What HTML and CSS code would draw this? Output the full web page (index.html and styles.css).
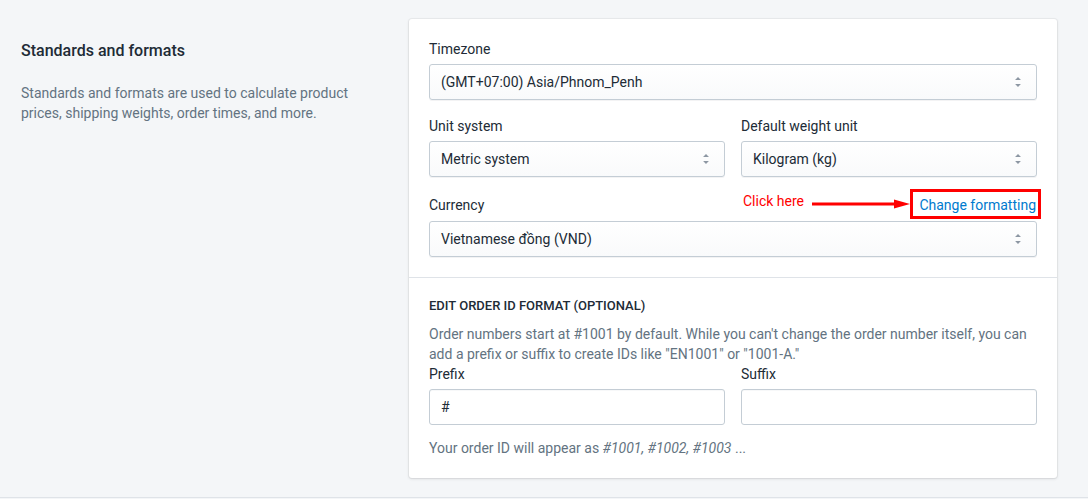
FILE: index.html
```html
<!DOCTYPE html>
<html lang="en">
<head>
<meta charset="utf-8">
<title>Standards and formats</title>
<link rel="stylesheet" href="styles.css">
</head>
<body>
<div class="page">
  <div class="layout">
    <div class="annotation">
      <h2 class="section-title">Standards and formats</h2>
      <p class="section-desc">Standards and formats are used to calculate product prices, shipping weights, order times, and more.</p>
    </div>
    <div class="card">
      <div class="card-section">
        <div class="field">
          <label class="label">Timezone</label>
          <div class="select">
            <span class="select-value">(GMT+07:00) Asia/Phnom_Penh</span>
            <svg class="select-arrows" viewBox="0 0 20 20" width="20" height="20"><path d="M13 8l-3-3-3 3h6zm-.1 4L10 15l-2.9-3h5.8z"/></svg>
          </div>
        </div>
        <div class="field-row">
          <div class="field">
            <label class="label">Unit system</label>
            <div class="select">
              <span class="select-value">Metric system</span>
              <svg class="select-arrows" viewBox="0 0 20 20" width="20" height="20"><path d="M13 8l-3-3-3 3h6zm-.1 4L10 15l-2.9-3h5.8z"/></svg>
            </div>
          </div>
          <div class="field">
            <label class="label">Default weight unit</label>
            <div class="select">
              <span class="select-value">Kilogram (kg)</span>
              <svg class="select-arrows" viewBox="0 0 20 20" width="20" height="20"><path d="M13 8l-3-3-3 3h6zm-.1 4L10 15l-2.9-3h5.8z"/></svg>
            </div>
          </div>
        </div>
        <div class="field field-currency">
          <div class="label-row">
            <label class="label">Currency</label>
            <a class="link" href="#">Change formatting</a>
            <div class="callout">
              <span class="callout-text">Click here</span>
              <svg class="callout-arrow" viewBox="0 0 98 10" width="98" height="10"><path d="M0 5h84" stroke="#f00" stroke-width="3"/><path d="M82 0.5L98 5L82 9.5z" fill="#f00"/></svg>
            </div>
            <div class="callout-box"></div>
          </div>
          <div class="select">
            <span class="select-value">Vietnamese đồng (VND)</span>
            <svg class="select-arrows" viewBox="0 0 20 20" width="20" height="20"><path d="M13 8l-3-3-3 3h6zm-.1 4L10 15l-2.9-3h5.8z"/></svg>
          </div>
        </div>
      </div>
      <div class="card-section section-order">
        <h3 class="subheading">Edit order ID format (optional)</h3>
        <p class="help">Order numbers start at #1001 by default. While you can't change the order number itself, you can add a prefix or suffix to create IDs like "EN1001" or "1001-A."</p>
        <div class="field-row tight">
          <div class="field">
            <label class="label">Prefix</label>
            <div class="input">#</div>
          </div>
          <div class="field">
            <label class="label">Suffix</label>
            <div class="input"></div>
          </div>
        </div>
        <p class="help footer-note">Your order ID will appear as <em>#1001, #1002, #1003</em> ...</p>
      </div>
    </div>
  </div>
</div>
</body>
</html>
```

FILE: styles.css
```css
* { box-sizing: border-box; }
html, body { margin: 0; padding: 0; background: #f4f6f8; }
body {
  font-family: Roboto, "Open Sans", Arial, sans-serif;
  font-size: 14px;
  line-height: 20px;
  color: #212b36;
}
.page {
  padding: 19px 31px 19px 21px;
  border-bottom: 1px solid #dfe3e8;
}
.layout {
  display: flex;
  align-items: flex-start;
}
.annotation {
  width: 388px;
  padding-top: 20px;
  padding-right: 40px;
}
.section-title {
  margin: 0;
  font-size: 16px;
  line-height: 24px;
  font-weight: 500;
  color: #212b36;
}
.section-desc {
  margin: 20px 0 0;
  color: #637381;
}
.card {
  flex: 1;
  background: #fff;
  border-radius: 3px;
  box-shadow: 0 0 0 1px rgba(63,63,68,.05), 0 1px 3px 0 rgba(63,63,68,.15);
}
.card-section {
  padding: 20px;
}
.card-section + .card-section {
  border-top: 1px solid #dfe3e8;
}
.field-row {
  display: flex;
  gap: 16px;
  margin-top: 16px;
}
.field-row .field { flex: 1; }
.label {
  display: block;
  line-height: 20px;
  margin-bottom: 5px;
}
.field-currency { margin-top: 18px; }
.label-row {
  position: relative;
  display: flex;
  justify-content: space-between;
  margin-bottom: 6px;
}
.label-row .label { margin-bottom: 0; }
.link {
  color: #007ace;
  text-decoration: none;
  padding-right: 1px;
}
.callout {
  position: absolute;
  left: 314px;
  top: 0;
  display: flex;
  align-items: center;
}
.callout-text {
  color: #f00;
  line-height: 14px;
  margin-top: -3px;
}
.callout-arrow {
  display: block;
  margin-left: 8px;
  margin-top: 4px;
}
.callout-box {
  position: absolute;
  left: 481px;
  top: -6px;
  width: 131px;
  height: 30px;
  border: 3px solid #f00;
}
.select {
  position: relative;
  display: flex;
  align-items: center;
  height: 36px;
  padding: 0 11px;
  border: 1px solid #c4cdd5;
  border-radius: 3px;
  background: linear-gradient(180deg, #fff, #f9fafb);
  box-shadow: 0 1px 0 0 rgba(22,29,37,.05);
}
.select-value { flex: 1; }
.select-arrows {
  fill: #8d97a3;
  margin-right: -3px;
}
.section-order { padding-top: 18px; }
.subheading {
  margin: 0;
  font-size: 13px;
  line-height: 20px;
  font-weight: 500;
  text-transform: uppercase;
  color: #212b36;
}
.help {
  margin: 8px 0 0;
  color: #637381;
}
.field-row.tight { margin-top: 0; }
.input {
  height: 36px;
  padding: 0 11px;
  display: flex;
  align-items: center;
  border: 1px solid #c4cdd5;
  border-radius: 3px;
  background: #fff;
  box-shadow: inset 0 1px 0 0 rgba(99,115,129,.05);
}
.footer-note { margin-top: 13px; }
```
